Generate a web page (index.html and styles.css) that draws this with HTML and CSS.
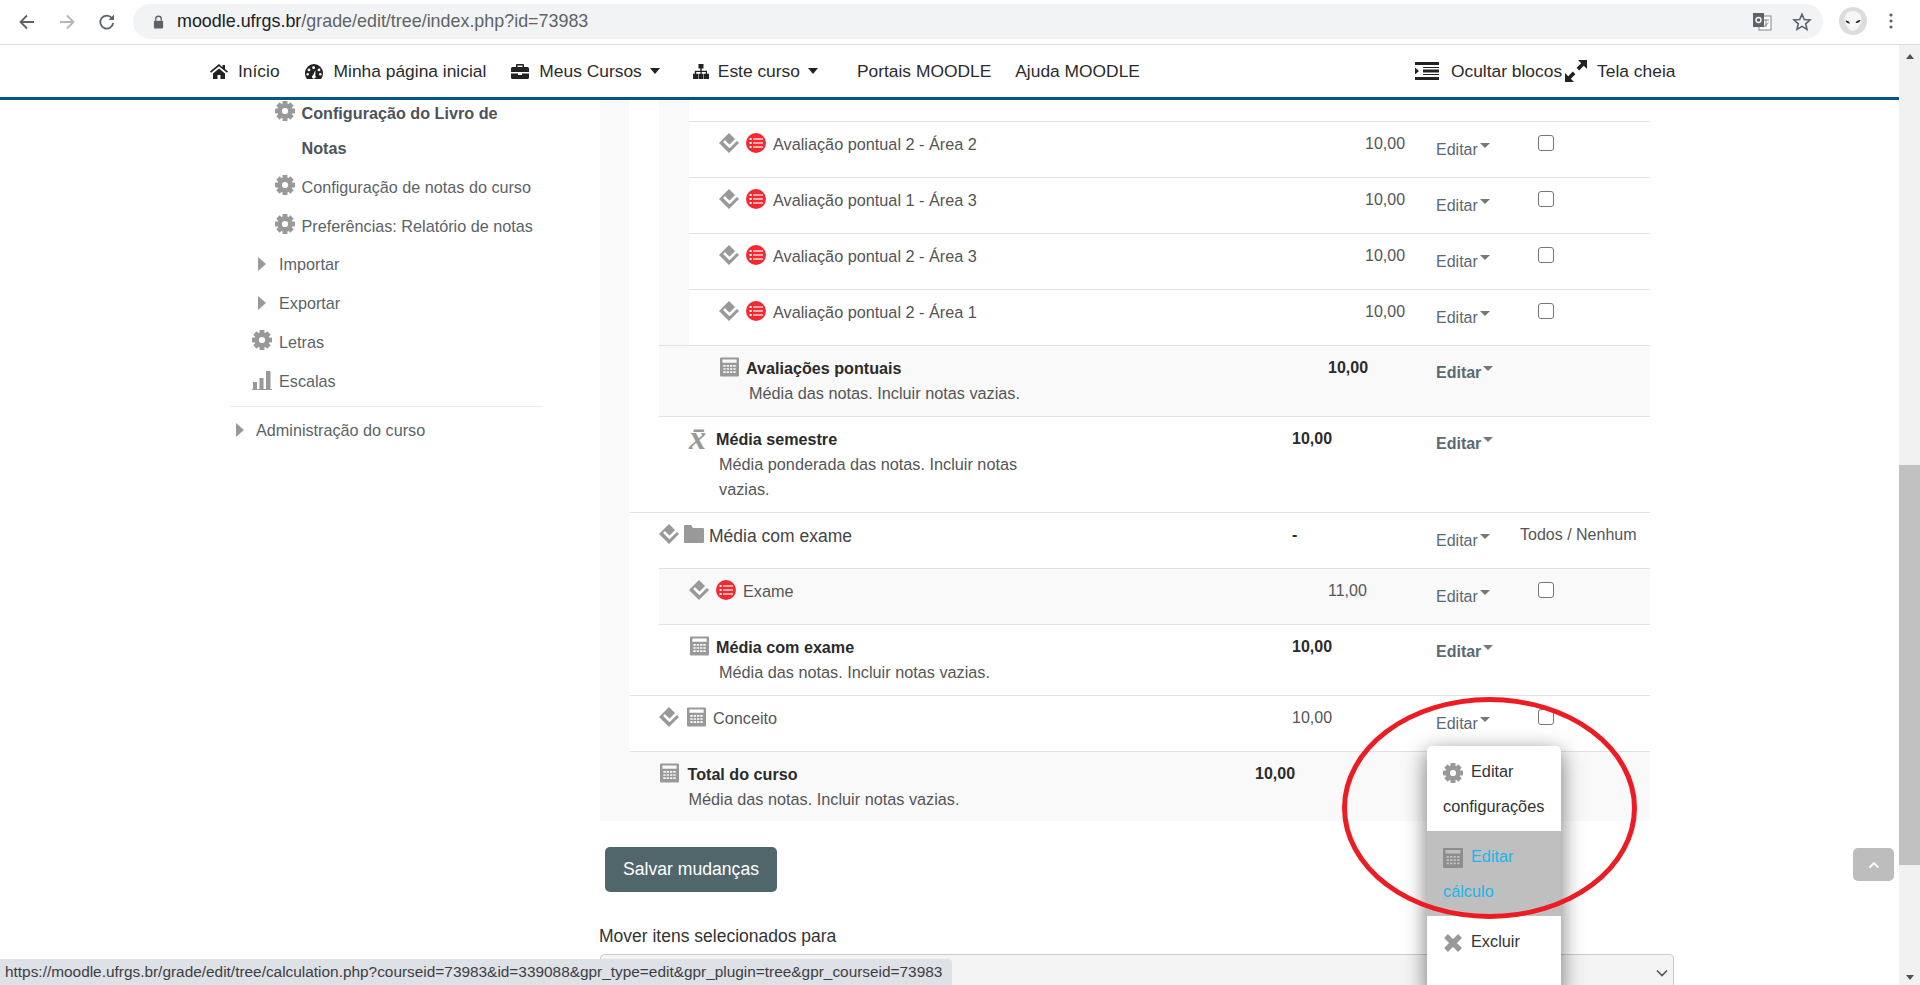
FILE: index.html
```html
<!DOCTYPE html>
<html lang="pt-BR">
<head>
    <meta charset="UTF-8">
    <title>Moodle UFRGS - Configuração do Livro de Notas</title>
    <link rel="stylesheet" href="styles.css">
</head>
<body>
    <svg class="sprite" xmlns="http://www.w3.org/2000/svg">
        <symbol id="i-gear" viewBox="0 0 20 20">
            <circle cx="10" cy="10" r="5.4" fill="none" stroke="currentColor" stroke-width="4.6"/>
            <g fill="currentColor">
                <rect x="7.6" y="0" width="4.8" height="4"/>
                <rect x="7.6" y="0" width="4.8" height="4" transform="rotate(45 10 10)"/>
                <rect x="7.6" y="0" width="4.8" height="4" transform="rotate(90 10 10)"/>
                <rect x="7.6" y="0" width="4.8" height="4" transform="rotate(135 10 10)"/>
                <rect x="7.6" y="0" width="4.8" height="4" transform="rotate(180 10 10)"/>
                <rect x="7.6" y="0" width="4.8" height="4" transform="rotate(225 10 10)"/>
                <rect x="7.6" y="0" width="4.8" height="4" transform="rotate(270 10 10)"/>
                <rect x="7.6" y="0" width="4.8" height="4" transform="rotate(315 10 10)"/>
            </g>
        </symbol>
        <symbol id="i-move" viewBox="0 0 20 20">
            <path d="M10 0 20 10 10 20 0 10Z" fill="currentColor"/>
            <path d="M5 8 10.500 13.500 18 6" fill="none" stroke="#fff" stroke-width="2.500"/>
        </symbol>
        <symbol id="i-red" viewBox="0 0 20 20">
            <circle cx="10" cy="10" r="10" fill="#f4282f"/>
            <g fill="#fff">
                <rect x="3.6" y="5" width="2" height="2"/><rect x="7" y="5.4" width="10" height="1.2"/>
                <rect x="3.6" y="9" width="2" height="2"/><rect x="7" y="9.4" width="10" height="1.2"/>
                <rect x="3.6" y="13" width="2" height="2"/><rect x="7" y="13.4" width="10" height="1.2"/>
            </g>
        </symbol>
        <symbol id="i-calc" viewBox="0 0 20 20">
            <path fill="currentColor" fill-rule="evenodd" d="M1 0h18a1 1 0 0 1 1 1v18a1 1 0 0 1-1 1H1a1 1 0 0 1-1-1V1a1 1 0 0 1 1-1Zm1.5 2v3.5h15V2ZM3.500 8v1.800h2.500V8Zm3.500 0v1.800h2.500V8Zm3.500 0v1.800H13V8Zm3.500 0v1.800h2.500V8ZM3.500 11.200V13h2.500v-1.800Zm3.500 0V13h2.500v-1.800Zm3.500 0V13H13v-1.800Zm3.500 0V13h2.500v-1.800ZM3.500 14.400v1.800h2.500v-1.800Zm3.500 0v1.800h2.500v-1.800Zm3.500 0v1.800H13v-1.800Zm3.500 0v1.800h2.500v-1.800Z"/>
        </symbol>
        <symbol id="i-folder" viewBox="0 0 20 18">
            <path fill="currentColor" d="M1 0h6l2 3h10a1 1 0 0 1 1 1v13a1 1 0 0 1-1 1H1a1 1 0 0 1-1-1V1a1 1 0 0 1 1-1Z"/>
        </symbol>
        <symbol id="i-cross" viewBox="0 0 20 20">
            <path d="M3 3l14 14M17 3 3 17" stroke="currentColor" stroke-width="5.400" fill="none"/>
        </symbol>
    </svg>

    <div class="chrome">
        <svg class="tool-icon" viewBox="0 0 20 20"><path d="M17 10H4M10 3.500 3.500 10l6.500 6.500" fill="none" stroke="#5f6368" stroke-width="1.800"/></svg>
        <svg class="tool-icon" viewBox="0 0 20 20"><path d="M3 10h13M10 3.500l6.500 6.500-6.500 6.500" fill="none" stroke="#b4b6b9" stroke-width="1.800"/></svg>
        <svg class="tool-icon" viewBox="0 0 20 20"><path d="M16.200 11a6.500 6.500 0 1 1-1.500-5.200" fill="none" stroke="#5f6368" stroke-width="1.800"/><path d="M17 2.500V8h-5.500Z" fill="#5f6368"/></svg>
        <div class="omnibox">
            <svg class="lock" viewBox="0 0 12 15"><path d="M3 6V4.200a3 3 0 0 1 6 0V6" fill="none" stroke="#5f6368" stroke-width="1.500"/><rect x="1" y="6" width="10" height="8.500" rx="1" fill="#5f6368"/></svg>
            <span class="url"><span class="host">moodle.ufrgs.br</span>/grade/edit/tree/index.php?id=73983</span>
            <svg class="translate" viewBox="0 0 20 20"><rect x="7" y="4" width="12" height="14" fill="#fff" stroke="#80868b"/><path d="M11 8h6M14 8v7M11.500 15l5-4" stroke="#80868b" fill="none"/><rect x="1" y="1" width="11" height="14" fill="#5f6368"/><circle cx="6.500" cy="8" r="2.500" fill="none" stroke="#fff" stroke-width="1.300"/></svg>
            <svg class="star" viewBox="0 0 20 20"><path d="M10 2.200l2.300 5.300 5.700.5-4.300 3.800 1.300 5.600-5-3-5 3 1.300-5.600L2 8l5.700-.5Z" fill="none" stroke="#5f6368" stroke-width="1.600"/></svg>
        </div>
        <svg class="avatar" viewBox="0 0 28 28">
            <circle cx="14" cy="14" r="14" fill="#dcdcdc"/>
            <path d="M14 4c6 0 8.500 4 8.500 8 0 6-5 12-8.500 12S5.500 18 5.500 12c0-4 2.500-8 8.500-8Z" fill="#f6f6f6"/>
            <path d="M6.500 13.500c2 0 4 1 4.500 3-2 .3-4-1-4.500-3ZM21.500 13c-2 0-4.500 1-5 3 2.500.3 4.500-1 5-3Z" fill="#222"/>
        </svg>
        <svg class="dots" viewBox="0 0 4 16"><circle cx="2" cy="2" r="1.600"/><circle cx="2" cy="8" r="1.600"/><circle cx="2" cy="14" r="1.600"/></svg>
    </div>

    <div class="window">
        <div class="viewport">
            <nav class="navbar">
                <a class="nav-item nav-home"><svg class="nav-icon" viewBox="0 0 18 15"><path d="M9 0 0 7.600l1 1.200L9 2.200l8 6.600 1-1.200-3-2.500V1h-2.500v2.200ZM3 9.500V15h4.500v-4h3v4H15V9.500L9 4.500Z" fill="#222"/></svg>Início</a>
                <a class="nav-item nav-my"><svg class="nav-icon" viewBox="0 0 18 15"><path fill="#222" fill-rule="evenodd" d="M9 0a9 9 0 0 1 9 9c0 2.200-.7 4.300-2 6H2a9 9 0 0 1-2-6 9 9 0 0 1 9-9ZM4 4.500a1.400 1.400 0 1 0 0 2.800 1.400 1.400 0 0 0 0-2.800Zm5-2.200A1.400 1.400 0 1 0 9 5a1.400 1.400 0 0 0 0-2.700Zm5 2.200a1.400 1.400 0 1 0 0 2.800 1.400 1.400 0 0 0 0-2.800ZM2.700 9a1.300 1.300 0 1 0 0 2.600 1.300 1.300 0 0 0 0-2.600Zm12.600 0a1.300 1.300 0 1 0 0 2.600 1.300 1.300 0 0 0 0-2.600ZM10.500 6 8 11.200a1.800 1.800 0 1 0 2.300.5Z"/></svg>Minha página inicial</a>
                <a class="nav-item nav-courses"><svg class="nav-icon" viewBox="0 0 18 15"><path fill="#222" d="M6 0h6a1 1 0 0 1 1 1v2h3.500A1.500 1.500 0 0 1 18 4.500V8H0V4.500A1.500 1.500 0 0 1 1.500 3H5V1a1 1 0 0 1 1-1Zm.5 1.500V3h5V1.500ZM0 9.500h7V11h4V9.500h7v4A1.500 1.500 0 0 1 16.500 15h-15A1.500 1.500 0 0 1 0 13.500Z"/></svg>Meus Cursos<span class="nav-caret"></span></a>
                <a class="nav-item nav-course"><svg class="nav-icon nav-icon-site" viewBox="0 0 16 15"><path fill="#222" d="M5.500 0h5v4.500H8.700v2.300H14v3h2V15h-5V9.800h1.800V8H8.700v1.800h1.800V15h-5V9.800h2V8H3.200v1.800H5V15H0V9.800h1.800v-3h5.500V4.500H5.500Z"/></svg>Este curso<span class="nav-caret"></span></a>
                <a class="nav-item nav-portal">Portais MOODLE</a>
                <a class="nav-item nav-help">Ajuda MOODLE</a>
                <a class="nav-item nav-blocks"><svg class="nav-icon nav-icon-blocks" viewBox="0 0 24 18"><path fill="#222" d="M0 0h24v3H0ZM8 7.500h16v3H8ZM8 5h16v1H8ZM8 12h16v1H8ZM0 15h24v3H0ZM0 5.500 4 9l-4 3.500Z"/></svg>Ocultar blocos</a>
                <a class="nav-item nav-full"><svg class="nav-icon nav-icon-full" viewBox="0 0 22 22"><path fill="#222" d="M13 0h9v9l-3.200-3.200-4.600 4.600-2.600-2.600 4.600-4.600ZM0 22v-9l3.200 3.200 4.600-4.600 2.600 2.600-4.600 4.600L9 22Z"/></svg>Tela cheia</a>
            </nav>

            <div class="page">
                <aside class="sidebar">
                    <div class="side-item lvl-3 side-bold"><svg class="gear"><use href="#i-gear"/></svg><span>Configuração do Livro de<br>Notas</span></div>
                    <div class="side-item lvl-3"><svg class="gear"><use href="#i-gear"/></svg><span>Configuração de notas do curso</span></div>
                    <div class="side-item lvl-3"><svg class="gear"><use href="#i-gear"/></svg><span>Preferências: Relatório de notas</span></div>
                    <div class="side-item lvl-2b side-import"><i class="tri"></i><span>Importar</span></div>
                    <div class="side-item lvl-2b"><i class="tri"></i><span>Exportar</span></div>
                    <div class="side-item lvl-2"><svg class="gear"><use href="#i-gear"/></svg><span>Letras</span></div>
                    <div class="side-item lvl-2"><svg class="bars" viewBox="0 0 20 20"><path fill="currentColor" d="M0 19h20v1H0ZM1 12h4v7H1ZM7.500 8h4v11h-4ZM14 1h4.500v18H14Z"/></svg><span>Escalas</span></div>
                    <div class="side-rule"></div>
                    <div class="side-item lvl-1"><i class="tri"></i><span>Administração do curso</span></div>
                </aside>

                <main class="content">
                    <div class="tree">
                        <div class="tree-inner">
                            <div class="indent">
                                <div class="indent-shade">
                                    <div class="stub"></div>
                                    <div class="row">
                                        <div class="name"><svg class="ico move"><use href="#i-move"/></svg><svg class="ico"><use href="#i-red"/></svg><span>Avaliação pontual 2 - Área 2</span></div>
                                        <div class="grade grade-a">10,00</div>
                                        <div class="edit"><a>Editar<i class="caret"></i></a></div>
                                        <div class="pick"><input type="checkbox" class="check"></div>
                                    </div>
                                    <div class="row">
                                        <div class="name"><svg class="ico move"><use href="#i-move"/></svg><svg class="ico"><use href="#i-red"/></svg><span>Avaliação pontual 1 - Área 3</span></div>
                                        <div class="grade grade-a">10,00</div>
                                        <div class="edit"><a>Editar<i class="caret"></i></a></div>
                                        <div class="pick"><input type="checkbox" class="check"></div>
                                    </div>
                                    <div class="row">
                                        <div class="name"><svg class="ico move"><use href="#i-move"/></svg><svg class="ico"><use href="#i-red"/></svg><span>Avaliação pontual 2 - Área 3</span></div>
                                        <div class="grade grade-a">10,00</div>
                                        <div class="edit"><a>Editar<i class="caret"></i></a></div>
                                        <div class="pick"><input type="checkbox" class="check"></div>
                                    </div>
                                    <div class="row">
                                        <div class="name"><svg class="ico move"><use href="#i-move"/></svg><svg class="ico"><use href="#i-red"/></svg><span>Avaliação pontual 2 - Área 1</span></div>
                                        <div class="grade grade-a">10,00</div>
                                        <div class="edit"><a>Editar<i class="caret"></i></a></div>
                                        <div class="pick"><input type="checkbox" class="check"></div>
                                    </div>
                                </div>
                                <div class="row row-shade row-total">
                                    <div class="name name-deep"><svg class="ico ico-calc"><use href="#i-calc"/></svg><div><b>Avaliações pontuais</b><p class="desc">Média das notas. Incluir notas vazias.</p></div></div>
                                    <div class="grade grade-b">10,00</div>
                                    <div class="edit"><a>Editar<i class="caret"></i></a></div>
                                    <div class="pick"></div>
                                </div>
                                <div class="row row-total">
                                    <div class="name"><span class="xbar">x̄</span><div><b>Média semestre</b><p class="desc">Média ponderada das notas. Incluir notas<br>vazias.</p></div></div>
                                    <div class="grade grade-c">10,00</div>
                                    <div class="edit"><a>Editar<i class="caret"></i></a></div>
                                    <div class="pick"></div>
                                </div>
                            </div>

                            <div class="row">
                                <div class="name name-cat"><svg class="ico move"><use href="#i-move"/></svg><svg class="ico ico-folder"><use href="#i-folder"/></svg><span>Média com exame</span></div>
                                <div class="grade grade-c grade-dash">-</div>
                                <div class="edit"><a>Editar<i class="caret"></i></a></div>
                                <div class="pick pick-all">Todos / Nenhum</div>
                            </div>
                            <div class="indent">
                                <div class="row row-shade">
                                    <div class="name"><svg class="ico move"><use href="#i-move"/></svg><svg class="ico"><use href="#i-red"/></svg><span>Exame</span></div>
                                    <div class="grade grade-b">11,00</div>
                                    <div class="edit"><a>Editar<i class="caret"></i></a></div>
                                    <div class="pick"><input type="checkbox" class="check"></div>
                                </div>
                                <div class="row row-total">
                                    <div class="name"><svg class="ico ico-calc"><use href="#i-calc"/></svg><div><b>Média com exame</b><p class="desc">Média das notas. Incluir notas vazias.</p></div></div>
                                    <div class="grade grade-c">10,00</div>
                                    <div class="edit"><a>Editar<i class="caret"></i></a></div>
                                    <div class="pick"></div>
                                </div>
                            </div>
                            <div class="row">
                                <div class="name"><svg class="ico move"><use href="#i-move"/></svg><svg class="ico ico-calc"><use href="#i-calc"/></svg><span>Conceito</span></div>
                                <div class="grade grade-c">10,00</div>
                                <div class="edit edit-open">
                                    <a>Editar<i class="caret"></i></a>
                                    <div class="menu">
                                        <a class="menu-item"><svg class="menu-icon"><use href="#i-gear"/></svg>Editar configurações</a>
                                        <a class="menu-item menu-hover"><svg class="menu-icon"><use href="#i-calc"/></svg>Editar cálculo</a>
                                        <a class="menu-item menu-last"><svg class="menu-icon"><use href="#i-cross"/></svg>Excluir</a>
                                    </div>
                                </div>
                                <div class="pick"><input type="checkbox" class="check"></div>
                            </div>
                            <div class="row row-shade row-total row-course">
                                <div class="name"><svg class="ico ico-calc"><use href="#i-calc"/></svg><div><b>Total do curso</b><p class="desc">Média das notas. Incluir notas vazias.</p></div></div>
                                <div class="grade grade-d">10,00</div>
                                <div class="edit"></div>
                                <div class="pick"></div>
                            </div>
                        </div>
                    </div>

                    <button class="save">Salvar mudanças</button>
                    <label class="move-label">Mover itens selecionados para</label>
                    <div class="move-select"><svg viewBox="0 0 12 8"><path d="M1 1.500 6 6.500l5-5" fill="none" stroke="#555" stroke-width="1.600"/></svg></div>
                </main>
            </div>
        </div>

        <div class="scrollbar">
            <i class="arrow-up"></i>
            <div class="thumb"></div>
            <i class="arrow-down"></i>
        </div>
    </div>

    <a class="to-top"><svg viewBox="0 0 12 8"><path d="M1.500 6.500 6 2l4.500 4.500" fill="none" stroke="#fff" stroke-width="1.800"/></svg></a>
    <div class="mark"></div>
    <div class="status">https://moodle.ufrgs.br/grade/edit/tree/calculation.php?courseid=73983&amp;id=339088&amp;gpr_type=edit&amp;gpr_plugin=tree&amp;gpr_courseid=73983</div>
</body>
</html>
```

FILE: styles.css
```css
* { box-sizing: border-box; }
html, body { height: 100%; }
body { margin: 0; overflow: hidden; font-family: "Liberation Sans", Arial, sans-serif; font-size: 16px; color: #555; background: #fff; display: flex; flex-direction: column; }
p { margin: 0; }
.sprite { display: none; }

/* browser toolbar */
.chrome { height: 45px; flex: none; display: flex; align-items: flex-start; border-bottom: 1px solid #dadce0; padding: 12px 0 0 17px; position: relative; }
.tool-icon { width: 20px; height: 20px; margin-right: 20px; flex: none; }
.omnibox { position: absolute; left: 133px; top: 4px; width: 1690px; height: 35px; border-radius: 18px; background: #f1f3f4; display: flex; align-items: center; padding-left: 20px; }
.lock { width: 11px; height: 14px; flex: none; }
.url { margin-left: 13px; font-size: 17.900px; color: #5f6368; flex: 1; }
.host { color: #202124; }
.translate { width: 20px; height: 20px; margin-right: 20px; }
.star { width: 20px; height: 20px; margin-right: 11px; }
.avatar { position: absolute; left: 1839px; top: 7px; width: 28px; height: 28px; }
.dots { position: absolute; left: 1889px; top: 13px; width: 4px; height: 16px; fill: #5f6368; }

.window { flex: 1; display: flex; min-height: 0; }
.viewport { flex: 1; min-width: 0; overflow: hidden; }

/* moodle navbar */
.navbar { height: 55px; border-bottom: 3px solid #03558a; display: flex; align-items: center; padding-left: 210px; font-size: 17.400px; color: #2b2b2b; }
.nav-item { display: flex; align-items: center; white-space: nowrap; }
.nav-icon { width: 18px; height: 15px; margin-right: 10px; flex: none; }
.nav-my { margin-left: 25px; }
.nav-my .nav-icon { margin-right: 11px; }
.nav-courses { margin-left: 25px; }
.nav-course { margin-left: 32px; }
.nav-icon-site { margin-right: 8px; }
.nav-portal { margin-left: 39px; }
.nav-help { margin-left: 24px; }
.nav-blocks { margin-left: 275px; }
.nav-icon-blocks { width: 24px; height: 18px; margin-right: 12px; }
.nav-full { margin-left: 3px; }
.nav-icon-full { width: 22px; height: 22px; margin-right: 10px; }
.nav-caret { width: 0; height: 0; border-left: 5px solid transparent; border-right: 5px solid transparent; border-top: 6px solid #222; margin-left: 8px; }

.page { display: flex; margin-top: -5px; }

/* left block */
.sidebar { width: 600px; flex: none; margin-top: -1.500px; padding: 0 57px 0 230px; font-size: 16.200px; line-height: 35px; color: #5b6368; }
.side-item { display: flex; align-items: flex-start; padding: 2px 0; white-space: nowrap; }
.side-bold { font-weight: bold; color: #4c5459; }
.side-import { margin-top: -1px; }
.lvl-3 { padding-left: 45px; }
.lvl-2 { padding-left: 22px; }
.lvl-2b { padding-left: 28px; }
.lvl-1 { padding-left: 6px; margin-top: 4px; }
.lvl-1 .tri { margin-right: 12px; }
.gear { width: 20px; height: 20px; margin: 5px 7px 0 0; color: #999; flex: none; }
.lvl-3 .gear { margin-right: 6.500px; }
.bars { width: 20px; height: 20px; margin: 6px 7px 0 0; color: #999; flex: none; }
.tri { width: 0; height: 0; border-left: 8px solid #999; border-top: 7px solid transparent; border-bottom: 7px solid transparent; margin: 10px 13px 0 0; flex: none; }
.side-rule { border-top: 1px solid #e9ecef; margin: 5px 0 0; }

/* grade tree */
.content { width: 1074px; flex: none; }
.tree { width: 1050px; background: #f9f9f9; padding-left: 29px; }
.tree-inner { background: #fff; }
.indent { margin-left: 30px; }
.indent-shade { background: #f9f9f9; padding-left: 30px; }
.stub { height: 21px; background: #fff; margin-top: 5px; }
.row { display: flex; min-height: 56px; border-top: 1px solid #dee2e6; background: #fff; }
.row-shade { background: #f9f9f9; }
.row-course { height: 70px; }
.name { flex: 1; min-width: 0; display: flex; align-items: flex-start; padding: 11px 0 10px 30px; line-height: 22px; font-size: 16.250px; }
.name-deep { padding-left: 60px; }
.name-cat { font-size: 17.500px; color: #444; }
.name-cat span { padding-top: 1px; }
.name b { color: #2b2b2b; font-size: 16.150px; }
.ico { width: 20px; height: 20px; margin-right: 7px; flex: none; color: #999; }
.ico-calc { width: 19px; margin-left: 1px; }
.ico-folder { height: 18px; margin: 1px 5px 0 -2px; }
.row-course .ico-calc { margin-right: 8.500px; }
.row-course .desc { margin-left: 1px; }
.xbar { width: 19px; flex: none; margin-right: 8px; font-family: "Liberation Serif", serif; font-style: italic; font-weight: bold; font-size: 34px; line-height: 20px; color: #999; }
.desc { margin: 2px 0 0 3px; line-height: 25px; font-size: 16.250px; white-space: nowrap; }
.grade { flex: none; padding-top: 11px; line-height: 22px; }
.grade-a { width: 71px; }
.grade-b { width: 108px; }
.grade-c { width: 144px; }
.grade-d { width: 181px; }
.grade-dash { font-weight: bold; color: #2b2b2b; }
.row-total .grade { font-weight: bold; color: #2b2b2b; }
.edit { width: 102px; flex: none; padding-top: 17px; line-height: 22px; color: #5a6a72; position: relative; }
.row-total .edit { font-weight: bold; padding-top: 16px; }
.caret { display: inline-block; width: 0; height: 0; border-left: 5px solid transparent; border-right: 5px solid transparent; border-top: 5px solid #777; margin-left: 2px; vertical-align: 7px; }
.pick { width: 112px; flex: none; }
.pick-all { margin-left: -18px; width: 130px; padding-top: 11px; line-height: 22px; white-space: nowrap; }
.check { appearance: none; display: block; width: 16px; height: 16px; margin: 13px 0 0; border: 1px solid #767676; border-radius: 3px; background: #fff; }

/* open action menu */
.menu { position: absolute; left: -9px; top: 50px; width: 134px; background: #fff; border-radius: 5px; box-shadow: 0 6px 22px rgba(0, 0, 0, 0.55); font-weight: normal; overflow: hidden; z-index: 2; }
.menu-item { display: block; padding: 8px 16px 7px; line-height: 35px; color: #333; font-size: 16.300px; }
.menu-icon { width: 20px; height: 20px; color: #999; margin-right: 8px; vertical-align: -6px; }
.menu-hover { background: #bfbfbf; color: #1ab6ea; }
.menu-hover .menu-icon { color: #8d8d8d; }
.menu-last { height: 80px; }

.save { display: block; margin: 26px 0 0 5px; width: 172px; height: 45px; border: none; border-radius: 5px; background: #51666b; color: #fff; font: 17.600px "Liberation Sans", Arial, sans-serif; }
.move-label { display: block; margin: 32px 0 0 -1px; line-height: 24px; color: #333; font-size: 17.500px; }
.move-select { margin-top: 6px; height: 60px; background: #f4f4f4; border: 1px solid #ccc; border-radius: 4px; padding: 14px 0 0 1055px; }
.move-select svg { display: block; width: 12px; height: 8px; }

/* page scrollbar */
.scrollbar { width: 21px; flex: none; background: #f1f1f1; position: relative; display: flex; flex-direction: column; align-items: center; }
.arrow-up { margin-top: 9px; border-left: 4px solid transparent; border-right: 4px solid transparent; border-bottom: 5px solid #505050; }
.thumb { width: 100%; height: 400px; background: #c1c1c1; margin-top: 406px; }
.arrow-down { margin-top: auto; margin-bottom: 5px; border-left: 4px solid transparent; border-right: 4px solid transparent; border-top: 5px solid #505050; }

/* floating bits */
.to-top { position: fixed; left: 1853px; top: 848px; width: 41px; height: 33px; background: #bdbdbd; border-radius: 5px; display: flex; align-items: center; justify-content: center; }
.to-top svg { width: 12px; height: 8px; }
.mark { position: fixed; left: 1342px; top: 697px; width: 295px; height: 222px; border: 5px solid #ed1c24; border-radius: 50%; z-index: 3; pointer-events: none; }
.status { position: fixed; left: 0; bottom: 0; width: 952px; height: 26px; padding-left: 5px; background: #dee1e6; border-top-right-radius: 4px; font-size: 15.400px; line-height: 26px; color: #3c4043; white-space: nowrap; z-index: 4; }
```
